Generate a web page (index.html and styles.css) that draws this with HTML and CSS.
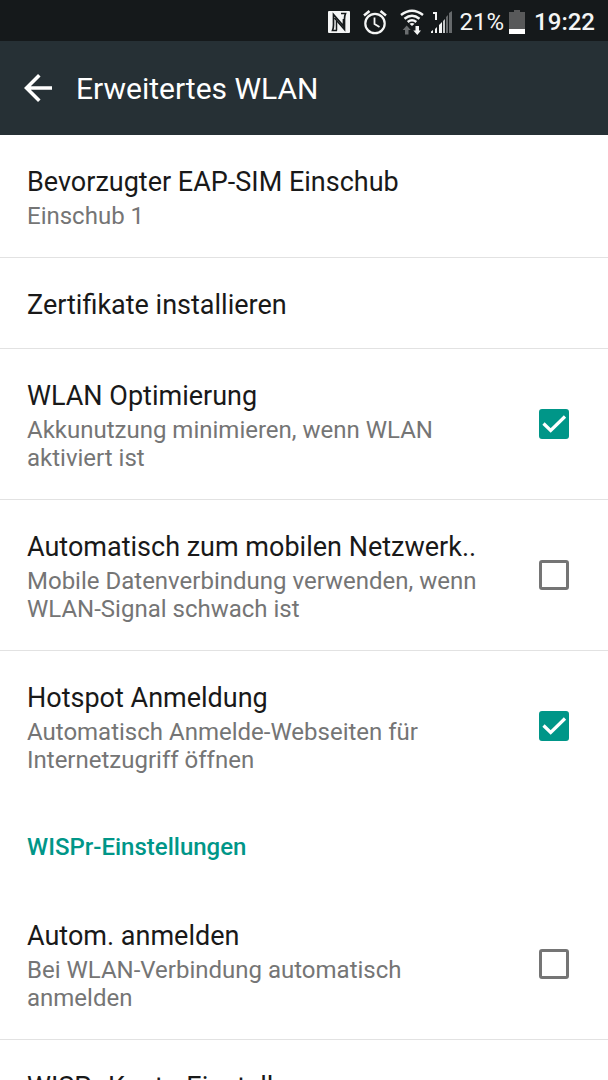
FILE: index.html
```html
<!DOCTYPE html>
<html lang="de">
<head>
<meta charset="utf-8">
<meta name="viewport" content="width=device-width, initial-scale=1">
<title>Erweitertes WLAN</title>
<link rel="stylesheet" href="styles.css">
</head>
<body>
<div class="screen">
  <div class="status-bar">
    <svg class="nfc" width="22" height="22" viewBox="0 0 22 22" aria-label="NFC">
      <rect width="22" height="22" rx="1" fill="#f4f5f5"/>
      <path fill="none" stroke="#15191b" stroke-width="1.700" d="M9 19.500H4.500Q5.500 17 5.500 14V3.500L15.500 15V8"/>
      <path fill="none" stroke="#15191b" stroke-width="1.700" d="M13 2.500H17.500Q16.500 5 16.500 8V18.500L6.500 7"/>
      <path fill="none" stroke="#15191b" stroke-width="1.500" d="M8.500 10v9.500"/>
    </svg>
    <svg class="alarm" width="24" height="26" viewBox="0 0 24 26" fill="none" stroke="#f4f5f5" aria-label="Wecker">
      <circle cx="12" cy="14.500" r="9.700" stroke-width="2.200"/>
      <path stroke-width="2.600" d="M1 6.500L6.500 2M23 6.500L17.500 2"/>
      <path stroke-width="1.800" d="M11.500 8.500v6.500l5 3"/>
    </svg>
    <svg class="wifi" width="24" height="26" viewBox="0 0 24 26" aria-label="WLAN">
      <g fill="none" stroke="#f4f5f5" stroke-width="2.500">
        <path d="M1 6Q12-2.500 23 6M4.500 9.700Q12 3.700 19.500 9.700M7.700 13Q12 9.500 16.300 13"/>
      </g>
      <path fill="#f4f5f5" d="M9.500 14.800Q12 13 14.500 14.800L12 17zM15.500 17h3.500v4.500h2L17.300 26l-4-4.500h2.200z"/>
      <path fill="#6b6e70" d="M5 25.500h3.500V21h2.200L6.700 16.500l-4 4.500H5z"/>
    </svg>
    <svg class="signal" width="21" height="22" viewBox="0 0 21 22" aria-label="Mobilfunk">
      <path fill="none" stroke="#f4f5f5" stroke-width="2" d="M2 2h3v7"/>
      <path fill="#f4f5f5" d="M0 20.500l2-1.500v3H0zM4 18l2-2v6H4zM8 14l3-3v11H8z"/>
      <path fill="#c4c6c7" d="M12 10l2-2v14h-2z"/>
      <path fill="#66696b" d="M15 6l2-2v18h-2zM18 2l3-2v22h-3z"/>
    </svg>
    <span class="percent">21%</span>
    <svg class="battery" width="16" height="24" viewBox="0 0 16 24" aria-label="Akku">
      <path fill="#58595a" d="M5 0h6v2h5v17H0V2h5z"/>
      <path fill="#fff" d="M0 19h16v5H0z"/>
    </svg>
    <time class="clock">19:22</time>
  </div>

  <header class="app-bar">
    <button class="back" type="button" aria-label="Zurück">
      <svg width="28" height="28" viewBox="0 0 28 28" fill="none" stroke="#fff" stroke-width="3.600"><path d="M28 14H3M15.300 1.300L2.500 14l12.800 12.700"/></svg>
    </button>
    <h1 class="app-title">Erweitertes WLAN</h1>
  </header>

  <main class="settings">
    <div class="row">
      <div class="text">
        <div class="title">Bevorzugter EAP-SIM Einschub</div>
        <div class="summary">Einschub 1</div>
      </div>
    </div>
    <div class="row">
      <div class="text"><div class="title">Zertifikate installieren</div></div>
    </div>
    <label class="row">
      <span class="text">
        <span class="title">WLAN Optimierung</span>
        <span class="summary">Akkunutzung minimieren, wenn WLAN aktiviert ist</span>
      </span>
      <span class="check">
        <input type="checkbox" class="box" checked>
        <svg class="tick" viewBox="0 0 30 30" fill="none" stroke="#fff" stroke-width="3.200"><path d="M4.500 14.500l7.200 7L26 7.500"/></svg>
      </span>
    </label>
    <label class="row">
      <span class="text">
        <span class="title">Automatisch zum mobilen Netzwerk..</span>
        <span class="summary">Mobile Datenverbindung verwenden, wenn WLAN-Signal schwach ist</span>
      </span>
      <span class="check"><input type="checkbox" class="box"></span>
    </label>
    <label class="row row-last">
      <span class="text">
        <span class="title">Hotspot Anmeldung</span>
        <span class="summary">Automatisch Anmelde-Webseiten für Internetzugriff öffnen</span>
      </span>
      <span class="check">
        <input type="checkbox" class="box" checked>
        <svg class="tick" viewBox="0 0 30 30" fill="none" stroke="#fff" stroke-width="3.200"><path d="M4.500 14.500l7.200 7L26 7.500"/></svg>
      </span>
    </label>
    <h2 class="section">WISPr-Einstellungen</h2>
    <label class="row">
      <span class="text">
        <span class="title">Autom. anmelden</span>
        <span class="summary">Bei WLAN-Verbindung automatisch anmelden</span>
      </span>
      <span class="check"><input type="checkbox" class="box"></span>
    </label>
    <div class="row">
      <div class="text"><div class="title">WISPr-Konto-Einstellungen</div></div>
    </div>
  </main>
</div>
</body>
</html>
```

FILE: styles.css
```css
* {
  box-sizing: border-box;
}

body {
  margin: 0;
  background: #fff;
  color: #191919;
  font-family: Roboto, "Noto Sans", sans-serif;
}

.screen {
  display: flex;
  flex-direction: column;
  height: 100vh;
  overflow: hidden;
}

.status-bar {
  display: flex;
  flex: none;
  align-items: center;
  justify-content: flex-end;
  padding: 9px 13px 6px;
  background: #15191b;
  color: #f4f5f5;
  font-size: 24px;
  line-height: 26px;
}

.nfc,
.alarm {
  margin-right: 13px;
}

.wifi {
  margin-right: 7px;
}

.signal {
  margin-right: 8px;
}

.percent {
  margin-right: 5px;
}

.battery {
  margin-right: 9px;
}

.clock {
  font-weight: 500;
}

.app-bar {
  display: flex;
  flex: none;
  align-items: center;
  gap: 24px;
  padding: 27px 24px;
  background: #263035;
  color: #fff;
}

.back {
  display: flex;
  padding: 0;
  border: 0;
  background: none;
}

.app-title {
  margin: 0;
  padding-top: 2px;
  font-size: 30px;
  font-weight: 400;
  line-height: 38px;
}

.settings {
  flex: 1;
  min-height: 0;
  overflow: hidden;
}

.row {
  display: flex;
  align-items: center;
  justify-content: space-between;
  gap: 49px;
  padding: 31px 39px 27px 27px;
  border-bottom: 1px solid #e2e2e2;
}

.row-last {
  border-bottom: 0;
}

.title,
.summary {
  display: block;
}

.title {
  font-size: 27px;
  line-height: 32px;
}

.summary {
  margin-top: 4px;
  color: #757575;
  font-size: 24px;
  line-height: 28px;
}

.check {
  position: relative;
  display: flex;
  flex: none;
  margin-bottom: 4px;
}

.box {
  width: 30px;
  height: 30px;
  margin: 0;
  border: 3px solid #757575;
  border-radius: 3px;
  appearance: none;
}

.box:checked {
  border-color: #009688;
  background: #009688;
}

.tick {
  position: absolute;
  inset: 0;
  pointer-events: none;
}

.section {
  margin: 0;
  padding: 32px 27px 28px;
  color: #009688;
  font-size: 24px;
  font-weight: 500;
  line-height: 28px;
}
```
